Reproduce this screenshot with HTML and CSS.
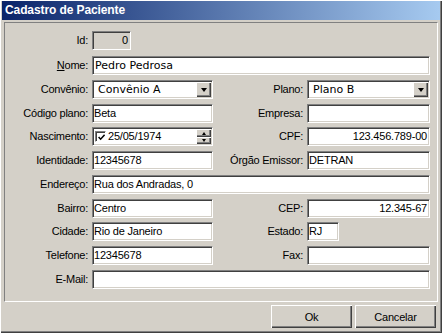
FILE: index.html
```html
<!DOCTYPE html>
<html lang="pt-BR">
<head>
<meta charset="utf-8">
<title>Cadastro de Paciente</title>
<link rel="stylesheet" href="styles.css">
</head>
<body>
<div class="window">
  <div class="titlebar">Cadastro de Paciente</div>
  <div class="panel">
    <div class="form">
      <div class="lbl c1">Id:</div>
      <div class="field disabled right w-id">0</div>

      <div class="lbl c1"><u>N</u>ome:</div>
      <div class="field wide dv span3">Pedro Pedrosa</div>

      <div class="lbl c1">Convênio:</div>
      <div class="field combo dv"><span class="txt">Convênio A</span><span class="cbtn"><span class="arrow"></span></span></div>
      <div class="lbl">Plano:</div>
      <div class="field combo dv"><span class="txt">Plano B</span><span class="cbtn"><span class="arrow"></span></span></div>

      <div class="lbl c1">Código plano:</div>
      <div class="field">Beta</div>
      <div class="lbl">Empresa:</div>
      <div class="field"></div>

      <div class="lbl c1">Nascimento:</div>
      <div class="field date">
        <span class="chk"><svg width="7" height="7" viewBox="0 0 7 7"><polyline points="0.6,3 2.6,5.2 6.6,0.8" fill="none" stroke="#000" stroke-width="1.5"/></svg></span>
        <span class="txt">25/05/1974</span>
        <span class="spin"><span class="sbtn up"><span class="sarrow up"></span></span><span class="sbtn down"><span class="sarrow down"></span></span></span>
      </div>
      <div class="lbl">CPF:</div>
      <div class="field right">123.456.789-00</div>

      <div class="lbl c1">Identidade:</div>
      <div class="field">12345678</div>
      <div class="lbl">Órgão Emissor:</div>
      <div class="field">DETRAN</div>

      <div class="lbl c1">Endereço:</div>
      <div class="field span3">Rua dos Andradas, 0</div>

      <div class="lbl c1">Bairro:</div>
      <div class="field">Centro</div>
      <div class="lbl">CEP:</div>
      <div class="field right">12.345-67</div>

      <div class="lbl c1">Cidade:</div>
      <div class="field">Rio de Janeiro</div>
      <div class="lbl">Estado:</div>
      <div class="field w-uf">RJ</div>

      <div class="lbl c1">Telefone:</div>
      <div class="field">12345678</div>
      <div class="lbl">Fax:</div>
      <div class="field"></div>

      <div class="lbl c1">E-Mail:</div>
      <div class="field span3"></div>
    </div>
  </div>
  <div class="footer">
    <button class="btn">Ok</button>
    <button class="btn">Cancelar</button>
  </div>
</div>
</body>
</html>
```

FILE: styles.css
```css
html, body {
  margin: 0;
  padding: 0;
  background: #D4D0C8;
}

.window {
  width: 442px;
  height: 333px;
  box-sizing: border-box;
  padding: 1px 2px 2px 2px;
  display: flex;
  flex-direction: column;
  background: #D4D0C8;
  box-shadow: inset 1px 1px 0 #FFFFFF, inset -1px -1px 0 #404040, inset -2px -2px 0 #808080;
  font-family: "Liberation Sans", Arial, sans-serif;
  font-size: 11px;
  color: #000;
}

.titlebar {
  height: 19px;
  line-height: 19px;
  padding-left: 3px;
  background: linear-gradient(to right, #0A246A, #A6CAF0);
  color: #fff;
  font-weight: bold;
  font-size: 12px;
  letter-spacing: -0.1px;
  white-space: nowrap;
  flex: none;
}

.panel {
  flex: none;
  margin: 2px 2px 0 2px;
  height: 280px;
  box-sizing: border-box;
  border: 1px solid;
  border-color: #808080 #FFFFFF #FFFFFF #808080;
}

.form {
  padding-top: 8px;
  display: grid;
  grid-template-columns: 83px 121px 86px 123px;
  grid-template-rows: 20.7px repeat(10, 19px);
  column-gap: 4px;
  row-gap: 4.7px;
  align-items: start;
}

.lbl {
  height: 19px;
  line-height: 19px;
  text-align: right;
  white-space: nowrap;
  letter-spacing: -0.25px;
}

.c1 { grid-column: 1; }
.span3 { grid-column: 2 / span 3; }

.field {
  box-sizing: border-box;
  height: 19px;
  border: 1px solid;
  border-color: #808080 #FFFFFF #FFFFFF #808080;
  box-shadow: inset 1px 1px 0 #404040, inset -1px -1px 0 #D4D0C8;
  background: #fff;
  line-height: 17px;
  padding: 0 2px 0 1px;
  white-space: nowrap;
  overflow: hidden;
  letter-spacing: -0.2px;
}

.field.dv {
  font-family: "DejaVu Sans", Verdana, sans-serif;
  font-size: 11px;
  letter-spacing: 0;
  padding-left: 2px;
}

.field.right { text-align: right; }
.field.disabled { background: #D4D0C8; }
.w-id { width: 39px; }
.w-uf { width: 32px; }

.combo {
  display: flex;
  align-items: stretch;
  padding: 0;
}

.combo .txt {
  flex: 1;
  padding-left: 3px;
}

.cbtn {
  flex: none;
  width: 15px;
  margin: 1px 1px 1px 0;
  box-sizing: border-box;
  background: #D4D0C8;
  box-shadow: inset 1px 1px 0 #FFFFFF, inset -1px -1px 0 #404040, inset -2px -2px 0 #808080;
  display: flex;
  align-items: center;
  justify-content: center;
}

.arrow {
  width: 0;
  height: 0;
  border-left: 3.5px solid transparent;
  border-right: 3.5px solid transparent;
  border-top: 4px solid #000;
  margin-top: 1px;
}

.date {
  display: flex;
  align-items: center;
  padding: 0;
}

.chk {
  flex: none;
  width: 11px;
  height: 11px;
  box-sizing: border-box;
  margin-left: 2px;
  margin-right: 2px;
  border: 1px solid;
  border-color: #808080 #FFFFFF #FFFFFF #808080;
  box-shadow: inset 1px 1px 0 #404040;
  background: #fff;
  display: flex;
  align-items: center;
  justify-content: center;
  padding: 1px 0 0 1px;
}

.chk svg { display: block; }

.date .txt {
  flex: 1;
  line-height: 17px;
}

.spin {
  flex: none;
  width: 15px;
  align-self: stretch;
  margin: 1px 1px 1px 0;
  display: flex;
  flex-direction: column;
}

.sbtn {
  flex: 1;
  background: #D4D0C8;
  box-shadow: inset 1px 1px 0 #FFFFFF, inset -1px -1px 0 #404040, inset -2px -2px 0 #808080;
  display: flex;
  align-items: center;
  justify-content: center;
}

.sarrow {
  width: 0;
  height: 0;
  border-left: 2.5px solid transparent;
  border-right: 2.5px solid transparent;
}

.sarrow.up { border-bottom: 3px solid #000; }
.sarrow.down { border-top: 3px solid #000; }

.footer {
  flex: 1;
  display: flex;
  justify-content: flex-end;
  align-items: flex-start;
  gap: 3px;
  padding: 3px 4px 0 0;
}

.btn {
  width: 81px;
  height: 23px;
  padding: 0;
  margin: 0;
  border: none;
  background: #D4D0C8;
  box-shadow: inset 1px 1px 0 #FFFFFF, inset -1px -1px 0 #404040, inset -2px -2px 0 #808080;
  font-family: "Liberation Sans", Arial, sans-serif;
  font-size: 11px;
  letter-spacing: -0.2px;
  color: #000;
}
```
